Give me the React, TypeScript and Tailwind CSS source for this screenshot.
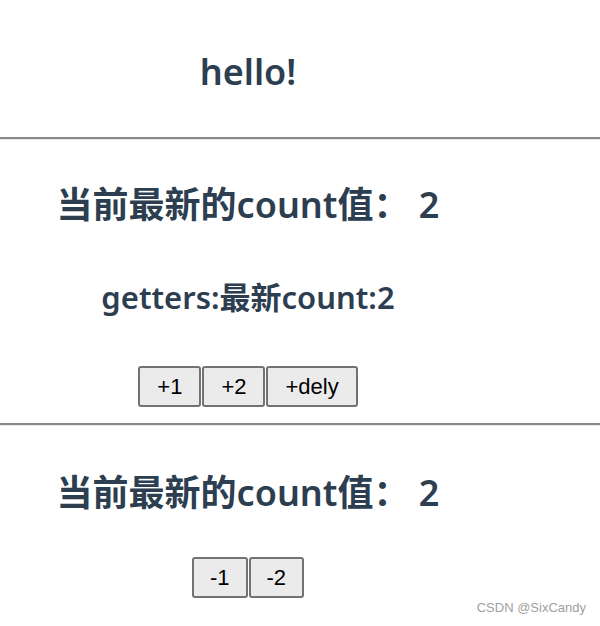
import React from "react";

const heading = "font-['Noto_Sans','Noto_Sans_CJK_SC',sans-serif] font-semibold";

const Btn = ({ label, wide }: { label: string; wide?: boolean }) => (
    <button
        className={`h-[41px] ${wide ? "px-[17px]" : "px-[16px]"} border-2 border-[#727272] rounded-[3px] bg-[#ebebeb] text-black text-[22px] leading-none font-['Liberation_Sans',sans-serif]`}
    >
        {label}
    </button>
);

const Divider = () => (
    <div className="w-full">
        <div className="h-[2px] bg-[#8a8a8a]" />
        <div className="h-[1px] bg-[#e6e6e6]" />
    </div>
);

const App = () => {
    const count = 2;
    return (
        <div className="w-[600px] h-[626px] bg-white text-[#2c3e50] overflow-hidden">
            <div className={`w-[496px] h-[137px] pt-[50px] text-center ${heading}`}>
                <h1 className="text-[36px] leading-[44px]">hello!</h1>
            </div>
            <Divider />
            <div className="w-[496px] pt-[43px] pb-[16px] flex flex-col items-center">
                <h2 className={`text-[36px] leading-[44px] whitespace-nowrap ${heading}`}>
                    当前最新的count值： {count}
                </h2>
                <h3 className={`mt-[52px] text-[31px] leading-[36px] whitespace-nowrap ${heading}`}>
                    getters:最新count:{count}
                </h3>
                <div className="mt-[51px] flex gap-[1px]">
                    <Btn label="+1" wide />
                    <Btn label="+2" wide />
                    <Btn label="+dely" wide />
                </div>
            </div>
            <Divider />
            <div className="w-[496px] pt-[45px] flex flex-col items-center">
                <h2 className={`text-[36px] leading-[44px] whitespace-nowrap ${heading}`}>
                    当前最新的count值： {count}
                </h2>
                <div className="mt-[42px] flex gap-[1px]">
                    <Btn label="-1" />
                    <Btn label="-2" />
                </div>
            </div>
            <div className="pr-[14px] mt-[2px] text-right text-[13px] leading-[16px] text-[#a0a0a0] font-['Liberation_Sans',sans-serif]">
                CSDN @SixCandy
            </div>
        </div>
    );
};

export default App;
